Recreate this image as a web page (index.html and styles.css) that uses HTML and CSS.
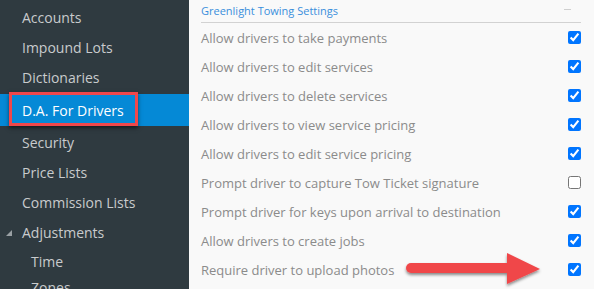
FILE: index.html
```html
<!DOCTYPE html>
<html lang="en">
<head>
  <meta charset="UTF-8" />
  <title>Greenlight Towing Settings</title>
  <link rel="stylesheet" href="styles.css">
</head>
<body>

  <div class="sidebar">
    <ul class="nav">
      <li class="nav-item">Accounts</li>
      <li class="nav-item">Impound Lots</li>
      <li class="nav-item">Dictionaries</li>
      <li class="nav-item active">
        D.A. For Drivers
        <span class="callout"></span>
      </li>
      <li class="nav-item">Security</li>
      <li class="nav-item">Price Lists</li>
      <li class="nav-item">Commission Lists</li>
      <li class="nav-item group">
        <svg class="caret" width="6" height="6" viewBox="0 0 6 6"><polygon points="6,0 6,6 0,6" /></svg>
        Adjustments
      </li>
      <li class="nav-item sub">Time</li>
      <li class="nav-item sub">Zones</li>
    </ul>
  </div>

  <div class="main">
    <div class="section-head">
      <span class="section-title">Greenlight Towing Settings</span>
      <span class="collapse"></span>
    </div>

    <div class="setting">
      <span>Allow drivers to take payments</span>
      <input type="checkbox" checked />
    </div>
    <div class="setting">
      <span>Allow drivers to edit services</span>
      <input type="checkbox" checked />
    </div>
    <div class="setting">
      <span>Allow drivers to delete services</span>
      <input type="checkbox" checked />
    </div>
    <div class="setting">
      <span>Allow drivers to view service pricing</span>
      <input type="checkbox" checked />
    </div>
    <div class="setting">
      <span>Allow drivers to edit service pricing</span>
      <input type="checkbox" checked />
    </div>
    <div class="setting">
      <span>Prompt driver to capture Tow Ticket signature</span>
      <input type="checkbox" />
    </div>
    <div class="setting">
      <span>Prompt driver for keys upon arrival to destination</span>
      <input type="checkbox" checked />
    </div>
    <div class="setting">
      <span>Allow drivers to create jobs</span>
      <input type="checkbox" checked />
    </div>
    <div class="setting">
      <span>Require driver to upload photos</span>
      <!-- annotation arrow -->
      <svg class="arrow" width="150" height="40" viewBox="0 0 150 40">
        <defs>
          <filter id="shadow" x="-10%" y="-30%" width="120%" height="170%">
            <feDropShadow dx="0" dy="2" stdDeviation="1.5" flood-color="#000" flood-opacity="0.45" />
          </filter>
        </defs>
        <g filter="url(#shadow)" fill="#f0474a">
          <path d="M8 10 H106 V20 H8 A5 5 0 0 1 8 10 Z" />
          <polygon points="104,0 137,16 104,31" />
        </g>
      </svg>
      <input type="checkbox" checked />
    </div>
  </div>

</body>
</html>
```

FILE: styles.css
```css
:root {
  --sidebar-bg: #2f3a40;
  --sidebar-text: #c9cbcd;
  --active-bg: #0589d6;
  --callout-red: #f0474a;
  --main-bg: #f9f9f9;
  --row-text: #8b8b8b;
  --title-blue: #3a8fdc;
  --rule: #d2d2d2;
}

* {
  box-sizing: border-box;
  margin: 0;
  padding: 0;
}

body {
  font-family: 'Open Sans', 'Noto Sans', sans-serif;
  background-color: var(--main-bg);
  display: flex;
  height: 289px;
  overflow: hidden;
}

.sidebar {
  width: 189px;
  flex-shrink: 0;
  background-color: var(--sidebar-bg);
  overflow: hidden;
}

.nav {
  list-style: none;
  padding-top: 2px;
}

.nav-item {
  position: relative;
  height: 30px;
  display: flex;
  align-items: center;
  padding-left: 22px;
  font-size: 14px;
  color: var(--sidebar-text);
  white-space: nowrap;
}

.nav-item.active {
  height: 32px;
  margin-top: 2px;
  background-color: var(--active-bg);
  color: #fff;
}

.nav-item.active + .nav-item {
  margin-top: 1px;
}

.nav-item.group {
  height: 31px;
}

.nav-item.sub {
  height: 26px;
  padding-left: 31px;
}

.caret {
  position: absolute;
  left: 6px;
  top: 13px;
  fill: #9aa0a4;
}

/* red annotation box over the active menu item */
.callout {
  position: absolute;
  left: 9px;
  top: -2px;
  width: 129px;
  height: 34px;
  border: 3px solid var(--callout-red);
  box-shadow: 0 2px 4px rgba(0, 0, 0, 0.55);
}

.main {
  flex: 1;
  padding: 0 13px 0 12px;
}

.section-head {
  position: relative;
  height: 23px;
  display: flex;
  align-items: center;
  border-bottom: 1px solid var(--rule);
  padding-bottom: 2px;
}

.section-title {
  font-size: 11px;
  color: var(--title-blue);
}

.collapse {
  position: absolute;
  right: 10px;
  top: 9px;
  width: 7px;
  height: 1px;
  background-color: #cfcfcf;
}

.setting {
  position: relative;
  height: 29px;
  display: flex;
  align-items: center;
  justify-content: space-between;
  font-size: 13px;
  color: var(--row-text);
  white-space: nowrap;
}

.setting input {
  width: 13px;
  height: 13px;
  margin: 0;
  accent-color: #0075ff;
}

.arrow {
  position: absolute;
  left: 202px;
  top: -2px;
}
```
